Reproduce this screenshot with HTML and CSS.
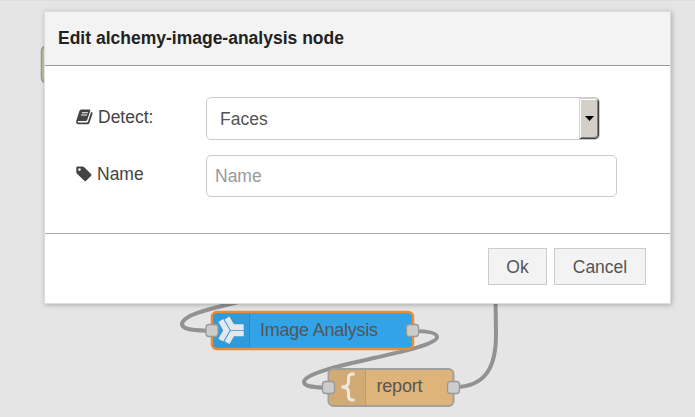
FILE: index.html
```
<!DOCTYPE html>
<html lang="en">
<head>
<meta charset="utf-8">
<title>Edit node</title>
<link rel="stylesheet" href="styles.css">
</head>
<body>
<svg class="workspace" width="695" height="417" viewBox="0 0 695 417">
  <path class="topline" d="M0 .5H695"/>
  <rect class="node olive" x="41.500" y="46" width="120" height="37" rx="5"/>
  <g class="wire">
    <path d="M254 298C222 307 186 312 182 323C181 330 194 330 211 331"/>
    <path d="M412 331C429 331 437 333 437 337C437 351 304 366 304 382C304 387 315 387 328 388"/>
    <path d="M454 387C488 387 496 364 496 334L495.500 298"/>
  </g>
  <rect class="node blue" x="212" y="312" width="201" height="37" rx="5"/>
  <path class="shade" d="M217 313H250V348H217Q213 348 213 344V317Q213 313 217 313Z"/>
  <path class="divider" d="M249.500 313V348"/>
  <g class="glyph">
    <path d="M227 318L232.300 327.100H243.700"/>
    <path d="M227 342.700L232.300 333.500H243.700"/>
    <path d="M220.800 320.500L226.500 330.300L220.800 340.200"/>
  </g>
  <text class="label" x="260" y="336" textLength="118">Image Analysis</text>
  <rect class="node tan" x="328.500" y="369" width="125" height="37" rx="5"/>
  <path class="shade" d="M334 370H366V405H334Q330 405 330 401V374Q330 370 334 370Z"/>
  <path class="divider" d="M365.500 370V405"/>
  <path class="brace" d="M354.500 374H352.500Q348.500 374 348.500 378V382Q348.500 387 341.500 387Q348.500 387 348.500 392V396Q348.500 400 352.500 400H354.500"/>
  <text class="label" x="376.500" y="392" textLength="46">report</text>
  <g class="port">
    <rect x="206" y="324.500" width="12" height="12" rx="3"/>
    <rect x="406.500" y="324.500" width="12" height="12" rx="3"/>
    <rect x="322.500" y="381.500" width="12" height="12" rx="3"/>
    <rect x="447.500" y="381.500" width="12" height="12" rx="3"/>
  </g>
</svg>
<main class="dialog">
  <header class="title">Edit alchemy-image-analysis node</header>
  <form class="fields">
    <div class="row detect">
      <label>
        <svg width="17" height="16" viewBox="0 0 16 16" preserveAspectRatio="none"><path class="ink" fill-rule="evenodd" d="M5 .5H12.500Q13.800 .5 13.400 2L10.500 11Q10.200 12 9 12H2.200Q1.300 12 1.600 13Q1.800 13.500 2.500 13.500H10Q11 13.500 11.300 12.500L14.300 2.800Q16 3.500 15.500 5L12.700 13.800Q12.300 15.300 10.800 15.300H2.300Q-.5 15.300 .2 12L3.200 2Q3.700 .5 5 .5ZM5.700 3.200L5.400 4.200H11L11.300 3.200ZM5 5.500L4.700 6.500H10.300L10.600 5.500Z"/></svg>
        <span>Detect:</span>
      </label>
      <div class="select"><span>Faces</span><i class="drop"><svg width="9" height="5" viewBox="0 0 9 5"><path d="M0 0H9L4.500 5Z"/></svg></i></div>
    </div>
    <div class="row name">
      <label>
        <svg width="16" height="16" viewBox="0 0 16 16"><path class="ink" fill-rule="evenodd" d="M1.500 .5H6.500Q7.500 .5 8.300 1.300L15 8Q16 9 15 10L10.200 14.800Q9.300 15.700 8.300 14.800L1.300 8Q.3 7 .3 6V1.700Q.3 .5 1.500 .5ZM3.500 2.300A1.300 1.300 0 1 0 3.500 4.900A1.300 1.300 0 1 0 3.500 2.300Z"/></svg>
        <span>Name</span>
      </label>
      <input type="text" placeholder="Name">
    </div>
  </form>
  <footer class="actions">
    <button class="ok">Ok</button>
    <button class="cancel">Cancel</button>
  </footer>
</main>
</body>
</html>
```

FILE: styles.css
```
* { box-sizing: border-box; }
body {
  margin: 0;
  height: 417px;
  padding: 11px 24px 0 44px;
  overflow: hidden;
  background: #e5e5e5;
  font: 17.5px/24px "Liberation Sans", sans-serif;
  color: #444;
}
.workspace { position: absolute; left: 0; top: 0; }
.topline { stroke: #dedede; }
.node { stroke: #999; stroke-width: 2; }
.olive { fill: #c7c899; stroke-width: 1.500; }
.blue { fill: #33a3e7; stroke: #ea8c37; stroke-width: 2.5; }
.tan { fill: #deb47b; stroke: #a3a09c; }
.wire { fill: none; stroke: #929292; stroke-width: 4; }
.shade { fill: #000; opacity: .05; }
.divider { stroke: #000; stroke-opacity: .08; }
.glyph { fill: none; stroke: #e5e8ea; stroke-width: 5.600; }
.brace { fill: none; stroke: #ece8e2; stroke-width: 3; }
.label { font-size: 18px; fill: #555; }
.port { fill: #ccc; stroke: #999; stroke-width: 1.300; }
.dialog {
  position: relative;
  width: 627px;
  height: 293px;
  display: flex;
  flex-direction: column;
  background: #fff;
  border: 1px solid #ddd;
  box-shadow: 1px 1px 5px rgba(0, 0, 0, .25);
}
.title {
  height: 54px;
  padding: 14px 12px 0 13px;
  background: #f3f3f3;
  border-bottom: 1px solid #999;
  font-size: 17.5px;
  font-weight: bold;
  color: #222;
}
.fields { flex: 1; padding: 31px 0 0 31px; }
.row { display: flex; align-items: flex-start; }
.row label { width: 130px; display: flex; gap: 5px; }
.row label svg { margin-top: 4px; }
.row.detect label { padding-top: 8px; }
.row.name label { padding-top: 7px; }
.ink { fill: #444; }
.select {
  width: 394px;
  height: 43px;
  display: flex;
  justify-content: space-between;
  border: 1px solid #ccc;
  border-radius: 5px;
  overflow: hidden;
  color: #555;
}
.select span { padding: 9px 0 0 13px; }
.drop {
  width: 20px;
  display: flex;
  align-items: center;
  justify-content: center;
  background: #d4d0c8;
  border: 1px solid;
  border-color: #d4d0c8 #404040 #404040 #d4d0c8;
  border-radius: 0 4px 4px 0;
  box-shadow: inset 1px 1px #fff, inset -1px -1px #808080;
}
.name { margin-top: 15px; }
.name input {
  width: 411px;
  height: 42px;
  padding: 0 8px;
  border: 1px solid #ccc;
  border-radius: 5px;
  background: #fff;
  font: inherit;
}
.name input::placeholder { color: #999; opacity: 1; }
.actions {
  height: 70px;
  padding: 14px 24px 0 0;
  border-top: 1px solid #aaa;
  display: flex;
  justify-content: flex-end;
  gap: 7px;
}
button {
  height: 37px;
  padding: 0;
  background: #f3f3f3;
  border: 1px solid #ccc;
  font: inherit;
  color: #555;
}
.ok { width: 59px; }
.cancel { width: 92px; }
```
